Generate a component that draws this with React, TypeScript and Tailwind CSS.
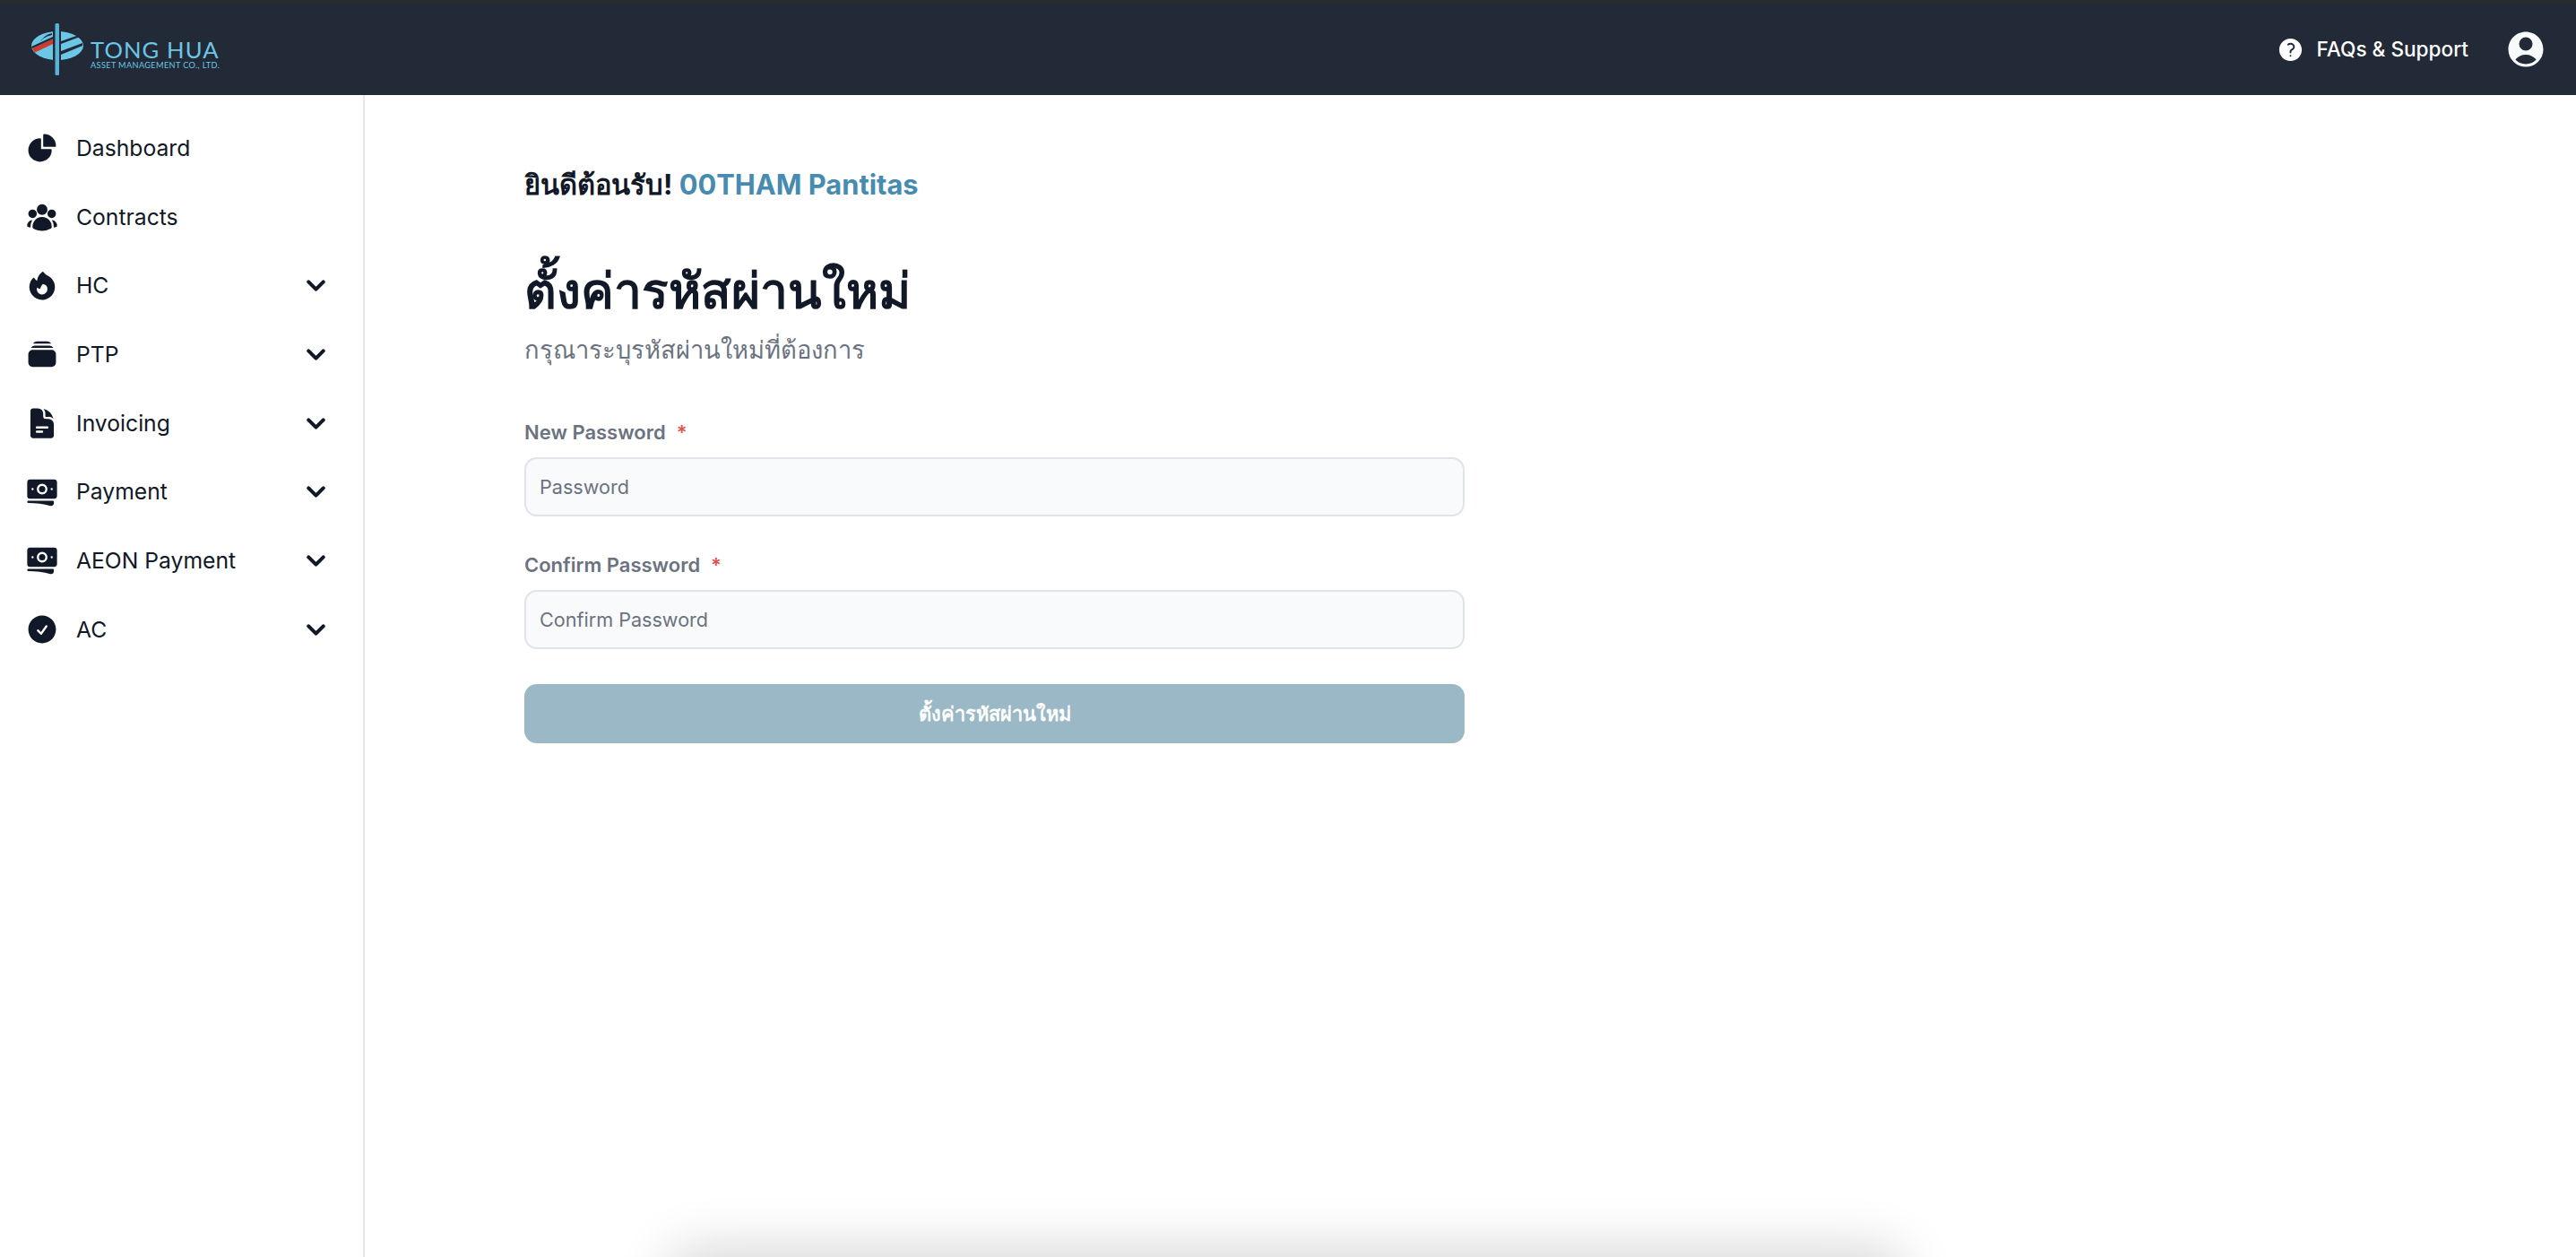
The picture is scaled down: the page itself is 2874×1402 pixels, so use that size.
import {
  HiChartPie,
  HiUserGroup,
  HiFire,
  HiRectangleStack,
  HiDocumentText,
  HiBanknotes,
  HiCheckCircle,
  HiQuestionMarkCircle,
  HiUserCircle,
} from "react-icons/hi2";
import { ChevronDown } from "lucide-react";
import type { ComponentType } from "react";

type NavItem = {
  label: string;
  icon: ComponentType<{ className?: string }>;
  hasMenu?: boolean;
};

const navItems: NavItem[] = [
  { label: "Dashboard", icon: HiChartPie },
  { label: "Contracts", icon: HiUserGroup },
  { label: "HC", icon: HiFire, hasMenu: true },
  { label: "PTP", icon: HiRectangleStack, hasMenu: true },
  { label: "Invoicing", icon: HiDocumentText, hasMenu: true },
  { label: "Payment", icon: HiBanknotes, hasMenu: true },
  { label: "AEON Payment", icon: HiBanknotes, hasMenu: true },
  { label: "AC", icon: HiCheckCircle, hasMenu: true },
];

function Logo() {
  return (
    <div className="flex items-center">
      <svg width="60" height="58" viewBox="0 0 60 58" className="shrink-0">
        <ellipse cx="29" cy="25" rx="29" ry="16" fill="#6cc6e6" />
        <path d="M23 11 Q13 13 8 24 Q12 15 23 13Z" fill="#222a38" />
        <path d="M1 28 L25 17 L25 22.5 L4 32.5Z" fill="#cf3a2e" />
        <path d="M0 26 L25 14.5 L25 17 L1 28Z" fill="#222a38" />
        <path d="M33 20 L56 12 L57 14 L33 23Z" fill="#222a38" />
        <path d="M33 31 L57 22 L57 25 L33 35Z" fill="#222a38" />
        <rect x="24" y="5" width="9" height="40" fill="#222a38" />
        <rect x="26.5" y="0" width="4.5" height="58" rx="1.5" fill="#58b4d6" />
      </svg>
      <div className="ml-[6px] pt-[10px] flex flex-col font-['Lato',sans-serif] text-[#6cc6e6]">
        <span className="text-[25.6px] leading-[25px] tracking-[1.1px] whitespace-nowrap">TONG HUA</span>
        <span className="text-[9.2px] leading-[10px] tracking-[0.35px] whitespace-nowrap">ASSET MANAGEMENT CO., LTD.</span>
      </div>
    </div>
  );
}

function PasswordField({ label, placeholder }: { label: string; placeholder: string }) {
  return (
    <div>
      <label className="block text-[22px] leading-[28px] font-semibold text-[#6b7280]">
        {label}
        <span className="ml-[12px] text-[#e05252]">*</span>
      </label>
      <input
        type="password"
        placeholder={placeholder}
        className="mt-[14px] block w-full h-[66px] px-[15px] rounded-[14px] border-2 border-[#e0e3e8] bg-[#f9fafb] text-[21.6px] placeholder:text-[#6b7280] outline-none"
      />
    </div>
  );
}

export default function App() {
  return (
    <div className="relative h-screen overflow-hidden flex flex-col bg-white font-['Inter','Noto_Sans',sans-serif] text-[#111827]">
      <header className="h-[106px] shrink-0 bg-[#222a38] border-t-4 border-[#272b2d] flex items-center justify-between pl-[35px] pr-[32px]">
        <Logo />
        <div className="flex items-center text-white">
          <HiQuestionMarkCircle className="w-[31px] h-[31px]" />
          <span className="ml-[14px] text-[22.6px] font-medium">FAQs &amp; Support</span>
          <HiUserCircle className="ml-[40px] w-[48px] h-[48px] text-[#f9fafb]" />
        </div>
      </header>

      <div className="flex flex-1 min-h-0">
        <aside className="w-[407px] shrink-0 border-r-2 border-[#e5e7eb] pt-[21px]">
          <nav className="flex flex-col">
            {navItems.map((item) => (
              <a key={item.label} className="h-[76.7px] flex items-center pl-[28px] pr-[36px]">
                <item.icon className="w-[38px] h-[38px] shrink-0" />
                <span className="ml-[19px] flex-1 text-[24.7px]">{item.label}</span>
                {item.hasMenu && <ChevronDown className="w-[33px] h-[33px]" strokeWidth={3} />}
              </a>
            ))}
          </nav>
        </aside>

        <main className="flex-1 pl-[178px] pt-[78px]">
          <div className="w-[1049px]">
            <p className="text-[30.8px] leading-[44px] font-bold">
              ยินดีต้อนรับ! <span className="text-[#488bb0]">00THAM Pantitas</span>
            </p>
            <h1 className="mt-[60px] text-[55px] leading-[72px] font-extrabold">ตั้งค่ารหัสผ่านใหม่</h1>
            <p className="mt-[11px] text-[27.3px] leading-[40px] text-[#6b7280]">กรุณาระบุรหัสผ่านใหม่ที่ต้องการ</p>
            <form className="mt-[57px] flex flex-col gap-[40px]">
              <PasswordField label="New Password" placeholder="Password" />
              <PasswordField label="Confirm Password" placeholder="Confirm Password" />
              <button
                type="button"
                className="-mt-[1px] h-[66px] rounded-[14px] bg-[#9ab8c5] text-white text-[21.8px] font-semibold"
              >
                ตั้งค่ารหัสผ่านใหม่
              </button>
            </form>
          </div>
        </main>
      </div>

      {/* toast sitting just below the fold, only its shadow shows */}
      <div className="absolute left-[765px] top-[1412px] w-[1340px] h-[80px] rounded-xl bg-white shadow-[0_0_60px_20px_rgba(0,0,0,0.16)]" />
    </div>
  );
}
